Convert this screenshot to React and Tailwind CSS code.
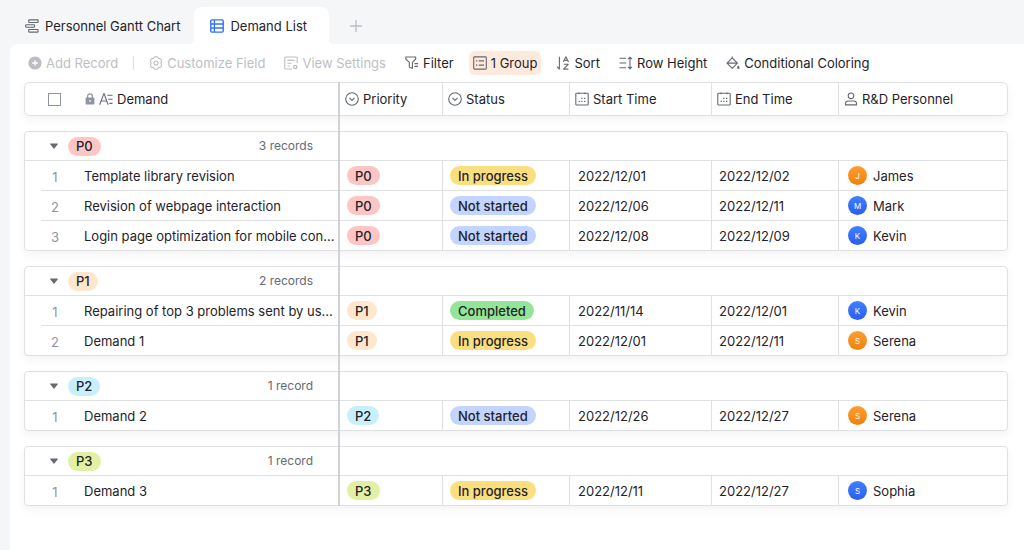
const TAG_COLORS = {
  P0: 'bg-[#fdc6c4]',
  P1: 'bg-[#fee7cd]',
  P2: 'bg-[#caeffc]',
  P3: 'bg-[#e3f0a3]',
  'In progress': 'bg-[#fbdf7f]',
  'Not started': 'bg-[#c2d4ff]',
  Completed: 'bg-[#95e599]',
};

const AVATAR_COLORS = {
  orange: 'from-[#ff9d2e] to-[#ee8207]',
  blue: 'from-[#4080ff] to-[#2b5df0]',
};

const GROUPS = [
  {
    priority: 'P0',
    records: [
      { name: 'Template library revision', status: 'In progress', start: '2022/12/01', end: '2022/12/02', person: 'James', color: 'orange' },
      { name: 'Revision of webpage interaction', status: 'Not started', start: '2022/12/06', end: '2022/12/11', person: 'Mark', color: 'blue' },
      { name: 'Login page optimization for mobile con...', status: 'Not started', start: '2022/12/08', end: '2022/12/09', person: 'Kevin', color: 'blue' },
    ],
  },
  {
    priority: 'P1',
    records: [
      { name: 'Repairing of top 3 problems sent by us...', status: 'Completed', start: '2022/11/14', end: '2022/12/01', person: 'Kevin', color: 'blue' },
      { name: 'Demand 1', status: 'In progress', start: '2022/12/01', end: '2022/12/11', person: 'Serena', color: 'orange' },
    ],
  },
  {
    priority: 'P2',
    records: [
      { name: 'Demand 2', status: 'Not started', start: '2022/12/26', end: '2022/12/27', person: 'Serena', color: 'orange' },
    ],
  },
  {
    priority: 'P3',
    records: [
      { name: 'Demand 3', status: 'In progress', start: '2022/12/11', end: '2022/12/27', person: 'Sophia', color: 'blue' },
    ],
  },
];

function Icon({ children, className = '' }) {
  return (
    <svg
      viewBox="0 0 14 14"
      fill="none"
      stroke="currentColor"
      strokeWidth="1.1"
      strokeLinejoin="round"
      className={`w-3.5 h-3.5 shrink-0 ${className}`}
      aria-hidden="true"
    >
      {children}
    </svg>
  );
}

const GanttIcon = () => (
  <Icon>
    <rect x="3.7" y="0.9" width="9.4" height="2.6" rx="0.5" />
    <rect x="0.7" y="5.7" width="8.8" height="2.6" rx="0.5" />
    <rect x="3.7" y="10.5" width="9.4" height="2.6" rx="0.5" />
  </Icon>
);

const GridIcon = () => (
  <Icon className="text-[#3370ff]">
    <rect x="0.8" y="0.9" width="12.4" height="12.2" rx="1" strokeWidth="1.4" />
    <path d="M4.4 1v12M1 5h12M1 9h12" strokeWidth="1.3" />
  </Icon>
);

const AddIcon = () => (
  <Icon>
    <circle cx="7" cy="7" r="6.6" fill="currentColor" stroke="none" />
    <path d="M7 4.2v5.6M4.2 7h5.6" stroke="#fff" strokeWidth="1.3" />
  </Icon>
);

const GearIcon = () => (
  <Icon>
    <path d="M5.5 1.1Q7 .2 8.5 1.1L9.4 2.4 11 2.6Q12.6 3.4 12.5 5.2L11.9 7l.6 1.8Q12.6 10.6 11 11.4L9.4 11.6 8.5 12.9Q7 13.8 5.5 12.9L4.6 11.6 3 11.4Q1.4 10.6 1.5 8.8L2.1 7 1.5 5.2Q1.4 3.4 3 2.6L4.6 2.4z" />
    <circle cx="7" cy="7" r="2" />
  </Icon>
);

const ViewIcon = () => (
  <Icon>
    <path d="M8 13H1.6a.8.8 0 0 1-.8-.8V1.8a.8.8 0 0 1 .8-.8h10.8a.8.8 0 0 1 .8.8v5.4M3.4 4.4h7.2M3.4 7.2h4.2M3.4 10h2.2" />
    <circle cx="11.2" cy="11" r="1.7" strokeWidth="1.3" />
  </Icon>
);

const FilterIcon = () => (
  <Icon>
    <path d="M.8 1h9.9v2L7.4 6.3v6.2L4.3 11V6.3L.8 3zM9.4 7.6h3.6M9.4 10.4h3.6" />
  </Icon>
);

const GroupIcon = () => (
  <Icon>
    <rect x="0.7" y="0.9" width="12.6" height="12.2" rx="0.8" />
    <path d="M3 4.9h1.4M5.8 4.9H11M3 9.1h1.4M5.8 9.1H11" strokeWidth="1.2" />
  </Icon>
);

const SortIcon = () => (
  <Icon>
    <path d="M3.4.8v12.2L1 10.6M7.3 6 9.9.8 12.5 6M8.2 4.4h3.4M7.8 8.3h4.4l-4.6 4.8h4.8" />
  </Icon>
);

const RowHeightIcon = () => (
  <Icon>
    <path d="M.5 2.2h6.7M.5 7h6.7M.5 11.8h6.7M11 1.2v11.6M9 3.2l2-2.1 2 2.1M9 10.8l2 2.1 2-2.1" />
  </Icon>
);

const PaintIcon = () => (
  <Icon>
    <path d="M6.2.6v2M6.2 1.9l5.2 5.2-5.2 5.2L1 7.1zM1.2 7.1h10" />
    <path d="M12.3 9.2c.7 1 1.2 1.8 1.2 2.5a1.2 1.2 0 0 1-2.4 0c0-.7.5-1.5 1.2-2.5z" fill="currentColor" stroke="none" />
  </Icon>
);

const SelectIcon = () => (
  <Icon>
    <circle cx="7" cy="7" r="6.3" />
    <path d="M4.4 5.9 7 8.4l2.6-2.5" />
  </Icon>
);

const DateIcon = () => (
  <Icon>
    <rect x="0.8" y="1.2" width="12.4" height="11.8" rx="0.8" />
    <path d="M4 .4v1.8M10 .4v1.8" />
    <path d="M6.2 6.4h1.3M9 6.4h1.3M3.6 9.4h1.3M6.2 9.4h1.3M9 9.4h1.3" strokeWidth="1.4" />
  </Icon>
);

const PersonIcon = () => (
  <Icon>
    <circle cx="7" cy="3.8" r="2.8" />
    <path d="M1.5 12.9v-1.4c0-1.6 1.1-2.5 2.7-2.5h5.6c1.6 0 2.7.9 2.7 2.5v1.4z" />
  </Icon>
);

const LockIcon = () => (
  <svg viewBox="0 0 10 12" fill="none" className="w-2.5 h-3 shrink-0 text-[#8f959e]" aria-hidden="true">
    <rect x="0.6" y="4.6" width="8.8" height="7" rx="0.9" fill="currentColor" />
    <path d="M2.6 5V3.2a2.4 2.4 0 0 1 4.8 0V5" stroke="currentColor" strokeWidth="1.2" />
    <path d="M5 7v2" stroke="#fff" strokeWidth="1.2" />
  </svg>
);

const TextIcon = () => (
  <Icon>
    <path d="M.6 12.8 5 1.4l4.1 11.4M2.1 9h5.4M8.3 3.2h5.2M9.3 7.3h4.2M10.4 11.4h3.1" />
  </Icon>
);

function Tag({ label }) {
  return (
    <span className={`inline-flex items-center h-[19px] px-2 rounded-full font-medium ${TAG_COLORS[label]}`}>
      {label}
    </span>
  );
}

function ToolButton({ icon, label, active, disabled }) {
  return (
    <button
      type="button"
      disabled={disabled}
      className={`flex items-center gap-1 h-6 px-1 rounded-md whitespace-nowrap ${
        active ? 'bg-[#feeadd]' : ''
      } ${disabled ? 'text-[#bbbfc4]' : ''}`}
    >
      <span className={disabled ? '' : 'text-[#646a73]'}>{icon}</span>
      {label}
    </button>
  );
}

function Columns() {
  return (
    <colgroup>
      <col className="w-[315px]" />
      <col className="w-[103px]" />
      <col className="w-[127px]" />
      <col className="w-[142px]" />
      <col className="w-[127px]" />
      <col />
    </colgroup>
  );
}

function Card({ children, className = '' }) {
  return (
    <div className={`bg-white border border-[#dee0e3] shadow-[0_4px_10px_rgba(31,35,41,0.05)] ${className}`}>
      <table className="w-full table-fixed border-separate border-spacing-0 text-left">
        <Columns />
        {children}
      </table>
    </div>
  );
}

function HeadCell({ icon, label, last }) {
  return (
    <th scope="col" className={`p-0 font-normal ${last ? '' : 'border-r border-[#dee0e3]'}`}>
      <div className="flex items-center gap-1 h-8 pl-[5px]">
        <span className="text-[#646a73]">{icon}</span>
        {label}
      </div>
    </th>
  );
}

function HeaderCard() {
  return (
    <Card className="rounded-md">
      <thead>
        <tr>
          <th scope="col" className="p-0 font-normal">
            <div className="flex items-center h-8 pl-[23px]">
              <input
                type="checkbox"
                aria-label="Select all"
                className="appearance-none w-[13px] h-[13px] border border-[#8f959e] bg-white"
              />
              <span className="flex items-center gap-1 ml-6">
                <LockIcon />
                <span className="text-[#646a73]"><TextIcon /></span>
                Demand
              </span>
            </div>
          </th>
          <HeadCell icon={<SelectIcon />} label="Priority" />
          <HeadCell icon={<SelectIcon />} label="Status" />
          <HeadCell icon={<DateIcon />} label="Start Time" />
          <HeadCell icon={<DateIcon />} label="End Time" />
          <HeadCell icon={<PersonIcon />} label="R&D Personnel" last />
        </tr>
      </thead>
    </Card>
  );
}

function RecordRow({ record, index, priority, last }) {
  // the card's own border closes the last row
  const line = last ? 'h-[29px]' : 'h-[30px] border-b';
  const cell = `p-0 border-[#dee0e3] ${line}`;
  return (
    <tr>
      <td className="p-0">
        <div className={`flex items-center ml-4 border-[#dee0e3] ${line}`}>
          <span className="w-7 pt-0.5 text-center text-[#8f959e]">{index}</span>
          <span className="ml-[15px] whitespace-nowrap">{record.name}</span>
        </div>
      </td>
      <td className={`${cell} border-r pl-[7px]`}>
        <div className="flex"><Tag label={priority} /></div>
      </td>
      <td className={`${cell} border-r pl-[7px]`}>
        <div className="flex"><Tag label={record.status} /></div>
      </td>
      <td className={`${cell} border-r pl-2`}>{record.start}</td>
      <td className={`${cell} border-r pl-[7px]`}>{record.end}</td>
      <td className={`${cell} pl-[9px]`}>
        <div className="flex items-center gap-[6px]">
          <span
            className={`flex items-center justify-center w-[19px] h-[19px] rounded-full bg-linear-to-b text-[8px] text-white ${AVATAR_COLORS[record.color]}`}
          >
            {record.person[0]}
          </span>
          {record.person}
        </div>
      </td>
    </tr>
  );
}

function GroupCard({ group }) {
  const count = group.records.length;
  return (
    <Card className="rounded-sm">
      <tbody>
        <tr>
          <th scope="rowgroup" colSpan={6} className="p-0 font-normal border-b border-[#dee0e3]">
            <div className="flex items-center justify-between w-72 h-7 pl-6">
              <button type="button" className="flex items-center gap-[9px]">
                <svg viewBox="0 0 10 8" className="w-2.5 h-2 text-[#646a73]" aria-hidden="true">
                  <path d="M1.6 1.5h6.8c.4 0 .6.4.4.7L5.4 6.6a.5.5 0 0 1-.8 0L1.2 2.2c-.2-.3 0-.7.4-.7z" fill="currentColor" />
                </svg>
                <Tag label={group.priority} />
              </button>
              <span className="text-xs text-[#646a73]">
                {count} {count === 1 ? 'record' : 'records'}
              </span>
            </div>
          </th>
        </tr>
        {group.records.map((record, i) => (
          <RecordRow
            key={record.name}
            record={record}
            index={i + 1}
            priority={group.priority}
            last={i === count - 1}
          />
        ))}
      </tbody>
    </Card>
  );
}

function Tabs() {
  return (
    <nav className="flex items-end h-11 pl-[25px]">
      <button type="button" className="flex items-center gap-[6px] h-[37px] whitespace-nowrap">
        <span className="text-[#646a73]"><GanttIcon /></span>
        Personnel Gantt Chart
      </button>
      <button
        type="button"
        aria-current="page"
        className="relative flex items-center gap-[6px] h-[37px] ml-3.5 pl-4 pr-[22px] rounded-t-lg bg-white whitespace-nowrap"
      >
        <GridIcon />
        Demand List
        <span className="absolute bottom-0 -left-1 w-1 h-1 bg-[radial-gradient(circle_at_0_0,transparent_4px,#fff_4px)]" />
        <span className="absolute bottom-0 -right-1 w-1 h-1 bg-[radial-gradient(circle_at_100%_0,transparent_4px,#fff_4px)]" />
      </button>
      <button type="button" aria-label="Add view" className="flex items-center h-[37px] ml-5 text-[#bbbfc4]">
        <Icon><path d="M7 1v12M1 7h12" strokeWidth="1.3" /></Icon>
      </button>
    </nav>
  );
}

function Toolbar() {
  return (
    <div className="flex items-center gap-[11px] h-[38px]">
      <ToolButton icon={<AddIcon />} label="Add Record" disabled />
      <span className="w-px h-3.5 bg-[#dee0e3]" />
      <ToolButton icon={<GearIcon />} label="Customize Field" disabled />
      <ToolButton icon={<ViewIcon />} label="View Settings" disabled />
      <ToolButton icon={<FilterIcon />} label="Filter" />
      <ToolButton icon={<GroupIcon />} label="1 Group" active />
      <ToolButton icon={<SortIcon />} label="Sort" />
      <ToolButton icon={<RowHeightIcon />} label="Row Height" />
      <ToolButton icon={<PaintIcon />} label="Conditional Coloring" />
    </div>
  );
}

export default function App() {
  return (
    <div className="min-h-screen flex flex-col bg-[#f4f6f8] font-['Inter',sans-serif] text-[13px] leading-5 text-[#1f2329]">
      <Tabs />
      <main className="flex-1 ml-2.5 pl-3.5 pr-4 pb-6 rounded-tl-lg bg-white">
        <Toolbar />
        <div className="relative flex flex-col gap-[15px]">
          <HeaderCard />
          {GROUPS.map((group) => (
            <GroupCard key={group.priority} group={group} />
          ))}
          {/* edge of the frozen column */}
          <div className="absolute inset-y-0 left-[314px] w-0.5 bg-[#d0d3d6]" />
        </div>
      </main>
    </div>
  );
}
